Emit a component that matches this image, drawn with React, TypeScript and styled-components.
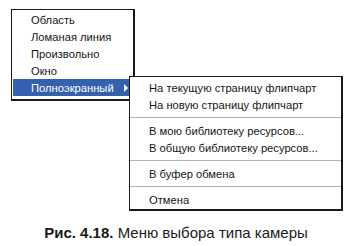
import {FC, Fragment} from "react";
import styled, {createGlobalStyle} from "styled-components";

const GlobalStyle = createGlobalStyle`
    html, body {
        margin: 0;
        background: #fff;
    }
    body {
        font-family: "Liberation Sans", Arial, sans-serif;
        color: #111;
    }
`;

const Figure = styled.div`
    width: 352px;
    height: 246px;
    overflow: hidden;
`;

const Stage = styled.div`
    position: relative;
    height: 211px;
    padding: 9px 0 0 11px;
    box-sizing: border-box;
`;

const Menu = styled.ul<{$width: number}>`
    list-style: none;
    margin: 0;
    width: ${p => p.$width}px;
    box-sizing: border-box;
    background: #fff;
    border: 1px solid #1a1a1a;
    border-right-width: 2px;
    border-bottom-width: 2px;
    font-size: 11.2px;
`;

const MainMenu = styled(Menu)`
    padding: 1px 2px 3px 1px;
`;

const SubMenu = styled(Menu)`
    position: absolute;
    left: 129px;
    top: 76px;
    padding: 2px 0 1px 0;
`;

const Item = styled.li<{$active?: boolean; $indent: number}>`
    position: relative;
    display: flex;
    align-items: center;
    height: 17px;
    padding-left: ${p => p.$indent}px;
    white-space: nowrap;
    background: ${p => (p.$active ? "#3461ad" : "transparent")};
    color: ${p => (p.$active ? "#fff" : "#151515")};
`;

const Arrow = styled.span`
    margin-left: auto;
    margin-right: 3px;
    width: 0;
    height: 0;
    border-top: 4px solid transparent;
    border-bottom: 4px solid transparent;
    border-left: 4px solid #fff;
`;

const Separator = styled.li`
    height: 9px;
    display: flex;
    align-items: center;

    &::before {
        content: "";
        flex: 1;
        height: 1px;
        background: #b4b4b4;
    }
`;

const Caption = styled.p`
    margin: 14px 0 0;
    text-align: center;
    font-size: 15px;
    line-height: 16px;
    color: #1a1a1a;

    b {
        font-weight: bold;
    }
`;

const mainItems = ["Область", "Ломаная линия", "Произвольно", "Окно"];

const subGroups = [
    ["На текущую страницу флипчарт", "На новую страницу флипчарт"],
    ["В мою библиотеку ресурсов...", "В общую библиотеку ресурсов..."],
    ["В буфер обмена"],
    ["Отмена"],
];

const App: FC = () => {
    return (
        <>
            <GlobalStyle/>
            <Figure>
                <Stage>
                    <MainMenu $width={124}>
                        {mainItems.map(label => (
                            <Item key={label} $indent={18}>{label}</Item>
                        ))}
                        <Item $active $indent={18}>
                            Полноэкранный
                            <Arrow/>
                        </Item>
                    </MainMenu>

                    <SubMenu $width={214}>
                        {subGroups.map((group, i) => (
                            <Fragment key={i}>
                                {i > 0 && <Separator/>}
                                {group.map(label => (
                                    <Item key={label} $indent={19}>{label}</Item>
                                ))}
                            </Fragment>
                        ))}
                    </SubMenu>
                </Stage>
                <Caption>
                    <b>Рис. 4.18.</b> Меню выбора типа камеры
                </Caption>
            </Figure>
        </>
    );
};

export default App;
